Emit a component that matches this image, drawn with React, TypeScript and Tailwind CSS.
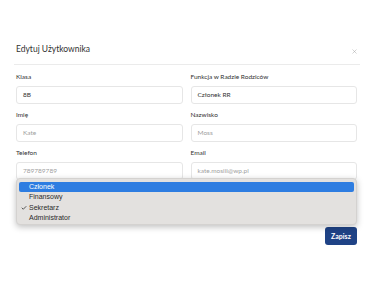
import { Check, X } from "lucide-react";

type FieldProps = {
    label: string;
    value?: string;
    placeholder?: string;
}

const Field = ({ label, value, placeholder }: FieldProps) => {
    return (
        <div className="flex flex-col">
            <label className="text-[6.5px] leading-[10px] text-[#333] h-[10px]">{label}</label>
            <div className="mt-[4px] h-[18px] rounded-[3px] border border-[#e6e6e6] bg-white flex items-center px-[6px]">
                {value
                    ? <span className="text-[6.5px] text-[#333]">{value}</span>
                    : <span className="text-[6.5px] text-[#a0a0a0]">{placeholder}</span>}
            </div>
        </div>
    )
}

const options = ["Członek", "Finansowy", "Sekretarz", "Administrator"];

export default function App() {
    return (
        <div className="w-[375px] h-[305px] bg-white relative font-['Lato','Open_Sans',sans-serif]">
            <div className="pt-[42px] pl-[16px] pr-[18px]">
                <div className="flex items-center justify-between h-[14px]">
                    <h2 className="text-[8.5px] text-[#333] font-normal">Edytuj Użytkownika</h2>
                    <X className="w-[7px] h-[7px] text-[#999] -mr-[1px] mt-[4px]" strokeWidth={1.5} />
                </div>
                <div className="mt-[8px] -ml-[2px] mr-[-3px] border-t border-[#ebebeb]" />
                <div className="grid grid-cols-2 gap-x-[8px] gap-y-[6px] mt-[7px] relative">
                    <Field label="Klasa" value="8B" />
                    <Field label="Funkcja w Radzie Rodziców" value="Członek RR" />
                    <Field label="Imię" placeholder="Kate" />
                    <Field label="Nazwisko" placeholder="Moss" />
                    <Field label="Telefon" placeholder="789789789" />
                    <Field label="Email" placeholder="kate.mosiii@wp.pl" />
                    <div className="col-span-2 h-[18px] mt-[12px] rounded-[3px] border border-[#e6e6e6]" />

                    <div className="absolute left-0 right-0 top-[106px] h-[47px] rounded-[4px] bg-[#e3e1df] shadow-[0_2px_6px_rgba(0,0,0,0.25)] border border-[#d4d2d0] pt-[3px] px-[2px] font-['Liberation_Sans',Arial,sans-serif]">
                        {options.map((o, i) => (
                            <div
                                key={o}
                                className={`h-[10.3px] flex items-center rounded-[2px] text-[7px] ${i === 0 ? "bg-[#2e7de1] text-white" : "text-[#2a2a2a]"}`}
                            >
                                <span className="w-[10px] flex justify-center">
                                    {i === 2 ? <Check className="w-[6px] h-[6px]" strokeWidth={3} /> : null}
                                </span>
                                <span>{o}</span>
                            </div>
                        ))}
                    </div>
                </div>
                <div className="flex justify-end mt-[11px]">
                    <button className="h-[18px] w-[32px] rounded-[3px] bg-[#1f4386] text-white text-[7px] font-bold">Zapisz</button>
                </div>
            </div>
        </div>
    )
}
